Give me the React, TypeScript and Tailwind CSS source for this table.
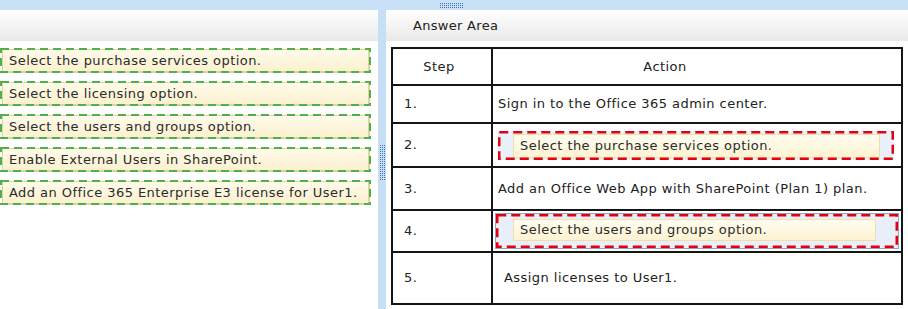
import React from 'react';

const font = { fontFamily: '"DejaVu Sans", Verdana, sans-serif' };

const choices = [
  'Select the purchase services option.',
  'Select the licensing option.',
  'Select the users and groups option.',
  'Enable External Users in SharePoint.',
  'Add an Office 365 Enterprise E3 license for User1.',
];

function Grip({ w, h }: { w: number; h: number }) {
  return (
    <svg width={w} height={h} className="block">
      <defs>
        <pattern id={`grip-${w}-${h}`} width="2" height="2" patternUnits="userSpaceOnUse">
          <rect width="1" height="1" fill="#3f6fae" />
        </pattern>
      </defs>
      <rect width={w} height={h} fill={`url(#grip-${w}-${h})`} />
    </svg>
  );
}

// dashed outline drawn over a box of known size
function DashFrame({ w, h, color, sw, dash }: { w: number; h: number; color: string; sw: number; dash: string }) {
  return (
    <svg width={w} height={h} className="pointer-events-none absolute left-0 top-0">
      <rect
        x={sw / 2}
        y={sw / 2}
        width={w - sw}
        height={h - sw}
        fill="none"
        stroke={color}
        strokeWidth={sw}
        strokeDasharray={dash}
      />
    </svg>
  );
}

function ChoiceTile({ text }: { text: string }) {
  return (
    <div className="relative h-[25px] w-[371px] px-[2px] py-[1px]">
      <div className="flex h-full items-center border border-[#e2d39a] bg-gradient-to-b from-[#fffbea] to-[#fbf1cf] pl-[6px] text-[13px] tracking-[0.45px] text-[#2b2b2b] shadow-[1px_1px_0_#d8d0b0]">
        {text}
      </div>
      <DashFrame w={371} h={25} color="#4fb14b" sw={2} dash="8 5" />
    </div>
  );
}

function Slot({ text, w, h, framed }: { text: string; w: number; h: number; framed?: boolean }) {
  return (
    <div
      className={
        framed
          ? 'relative border border-[#8fa4c2] bg-[#e8eff9] pb-[7px] pl-[17px] pr-[22px] pt-[5px]'
          : 'relative bg-[#e9f0f9] pb-[2px] pl-[15px] pr-[14px] pt-[3px]'
      }
      style={{ width: w, height: h }}
    >
      <div className="flex h-full items-center border border-[#efe0a8] bg-gradient-to-b from-[#fffdf0] to-[#fdf3d2] pl-[6px] text-[13px] tracking-[0.45px] text-[#2b2b2b]">
        {text}
      </div>
      <DashFrame w={w - (framed ? 2 : 0)} h={h - (framed ? 2 : 0)} color="#e3000f" sw={2.5} dash="9 5" />
    </div>
  );
}

const rows: { step: string; h: string; cell: React.ReactNode }[] = [
  { step: '1.', h: 'h-[38px]', cell: <span className="pl-[5px]">Sign in to the Office 365 admin center.</span> },
  {
    step: '2.',
    h: 'h-[44px]',
    cell: (
      <div className="pl-[5px]">
        <Slot text="Select the purchase services option." w={396} h={29} />
      </div>
    ),
  },
  { step: '3.', h: 'h-[43px]', cell: <span className="pl-[5px]">Add an Office Web App with SharePoint (Plan 1) plan.</span> },
  {
    step: '4.',
    h: 'h-[42px]',
    cell: (
      <div className="pl-[2px]">
        <Slot text="Select the users and groups option." w={404} h={36} framed />
      </div>
    ),
  },
  { step: '5.', h: 'h-[52px]', cell: <span className="pl-[11px]">Assign licenses to User1.</span> },
];

export default function App() {
  return (
    <div className="flex h-[309px] w-[908px] flex-col overflow-hidden bg-white text-[#222]" style={font}>
      <div className="flex h-[10px] shrink-0 justify-center bg-[#c9e1f7] pt-[3px]">
        <div className="ml-[-4px]">
          <Grip w={24} h={5} />
        </div>
      </div>

      <div className="flex flex-1">
        {/* source list */}
        <div className="flex w-[378px] flex-col">
          <div className="h-[31px] bg-gradient-to-b from-[#ffffff] to-[#e9e9e9]" />
          <div className="flex flex-col gap-[8px] pt-[7px]">
            {choices.map((c) => (
              <ChoiceTile key={c} text={c} />
            ))}
          </div>
        </div>

        {/* vertical splitter */}
        <div className="flex w-[8px] flex-col items-center bg-[#c6dff7] pt-[135px]">
          <Grip w={5} h={36} />
        </div>

        {/* answer area */}
        <div className="flex flex-1 flex-col">
          <div className="flex h-[31px] items-center bg-gradient-to-b from-[#ffffff] to-[#e9e9e9] pl-[27px] text-[13px] tracking-[0.3px] text-[#222]">
            Answer Area
          </div>
          <div className="pl-[5px] pt-[6px]">
            <table className="w-[512px] border-collapse border-2 border-[#151515] text-[13px] tracking-[0.45px] text-[#222]">
              <tbody>
                <tr className="h-[37px]">
                  <td className="w-[100px] border-2 border-[#151515] pr-[6px] text-center">Step</td>
                  <td className="border-2 border-[#151515] pr-[64px] text-center">Action</td>
                </tr>
                {rows.map((r) => (
                  <tr key={r.step} className={r.h}>
                    <td className="border-2 border-[#151515] pl-[11px]">{r.step}</td>
                    <td className="border-2 border-[#151515] p-0">{r.cell}</td>
                  </tr>
                ))}
              </tbody>
            </table>
          </div>
        </div>
      </div>
    </div>
  );
}
